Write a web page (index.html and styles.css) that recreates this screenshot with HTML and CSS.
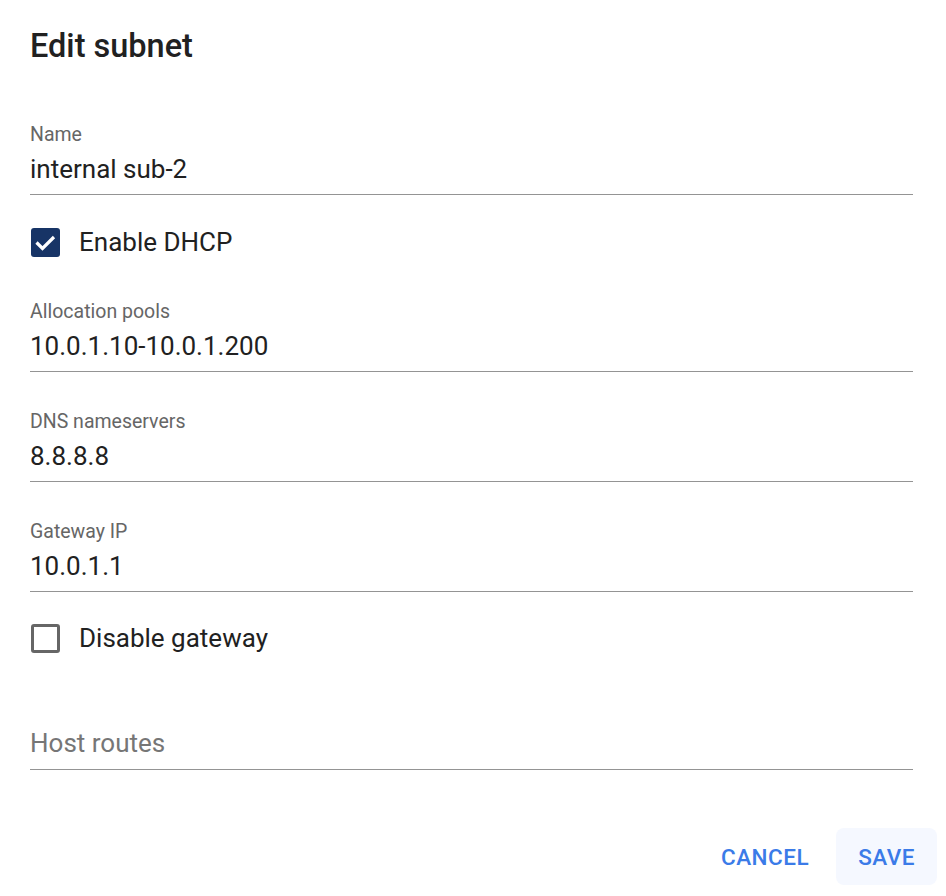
FILE: index.html
```html
<!DOCTYPE html>
<html>
<head>
<meta charset="utf-8">
<link rel="stylesheet" href="styles.css">
</head>
<body>
<div class="dialog">
  <div class="content">
    <h1 class="title">Edit subnet</h1>
    <div class="field first">
      <div class="label">Name</div>
      <div class="value">internal sub-2</div>
    </div>
    <div class="check row-dhcp">
      <span class="box checked">
        <svg viewBox="0 0 29 29" width="29" height="29"><polyline points="5.5,14.5 11.5,20.5 23,9" fill="none" stroke="#fff" stroke-width="3.2" stroke-linecap="butt" stroke-linejoin="miter"/></svg>
      </span>
      <span class="check-label">Enable DHCP</span>
    </div>
    <div class="field after-check">
      <div class="label">Allocation pools</div>
      <div class="value">10.0.1.10-10.0.1.200</div>
    </div>
    <div class="field">
      <div class="label">DNS nameservers</div>
      <div class="value">8.8.8.8</div>
    </div>
    <div class="field">
      <div class="label">Gateway IP</div>
      <div class="value">10.0.1.1</div>
    </div>
    <div class="check row-gw">
      <span class="box"></span>
      <span class="check-label">Disable gateway</span>
    </div>
    <div class="field routes">
      <div class="value placeholder">Host routes</div>
    </div>
  </div>
  <div class="actions">
    <button class="btn">CANCEL</button>
    <button class="btn primary">SAVE</button>
  </div>
</div>
</body>
</html>
```
FILE: styles.css
```css
html, body {
  margin: 0;
  padding: 0;
  background: #fff;
}
body {
  font-family: Roboto, "Noto Sans", sans-serif;
  color: #212121;
  width: 946px;
  height: 896px;
  overflow: hidden;
}
.dialog {
  display: flex;
  flex-direction: column;
}
.content {
  padding: 28px 33px 0 30px;
  display: flex;
  flex-direction: column;
}
.title {
  margin: 0;
  font-size: 32.5px;
  line-height: 36px;
  font-weight: 500;
  color: #212121;
}
.field {
  display: flex;
  flex-direction: column;
  padding-bottom: 7px;
  border-bottom: 1px solid #949494;
  margin-top: 38px;
}
.field.first {
  margin-top: 59px;
}
.field.after-check {
  margin-top: 43px;
}
.label {
  font-size: 19.5px;
  line-height: 24px;
  color: #666666;
  margin-bottom: 4px;
}
.value {
  font-size: 26px;
  line-height: 36px;
  color: #212121;
}
.value.placeholder {
  color: #767676;
}
.field.routes {
  margin-top: 72px;
  padding-bottom: 8px;
}
.check {
  display: flex;
  align-items: center;
  height: 29px;
  gap: 19px;
  margin-top: 33px;
}
.check.row-gw {
  margin-top: 32px;
}
.box {
  width: 29px;
  height: 29px;
  box-sizing: border-box;
  border-radius: 3px;
  border: 3px solid #666666;
  margin-left: 1px;
  flex: none;
}
.box.checked {
  background: #173466;
  border: none;
}
.box svg {
  display: block;
}
.check-label {
  font-size: 26px;
  line-height: 29px;
  color: #212121;
}
.actions {
  display: flex;
  justify-content: flex-end;
  gap: 5px;
  padding-right: 9px;
  margin-top: 58px;
}
.btn {
  font-family: Roboto, "Noto Sans", sans-serif;
  font-size: 22.5px;
  font-weight: 500;
  letter-spacing: 0.5px;
  color: #3b7be8;
  background: transparent;
  border: none;
  border-radius: 8px;
  height: 57px;
  padding: 0 22px;
  cursor: pointer;
}
.btn.primary {
  background: #f5f8ff;
}
```
